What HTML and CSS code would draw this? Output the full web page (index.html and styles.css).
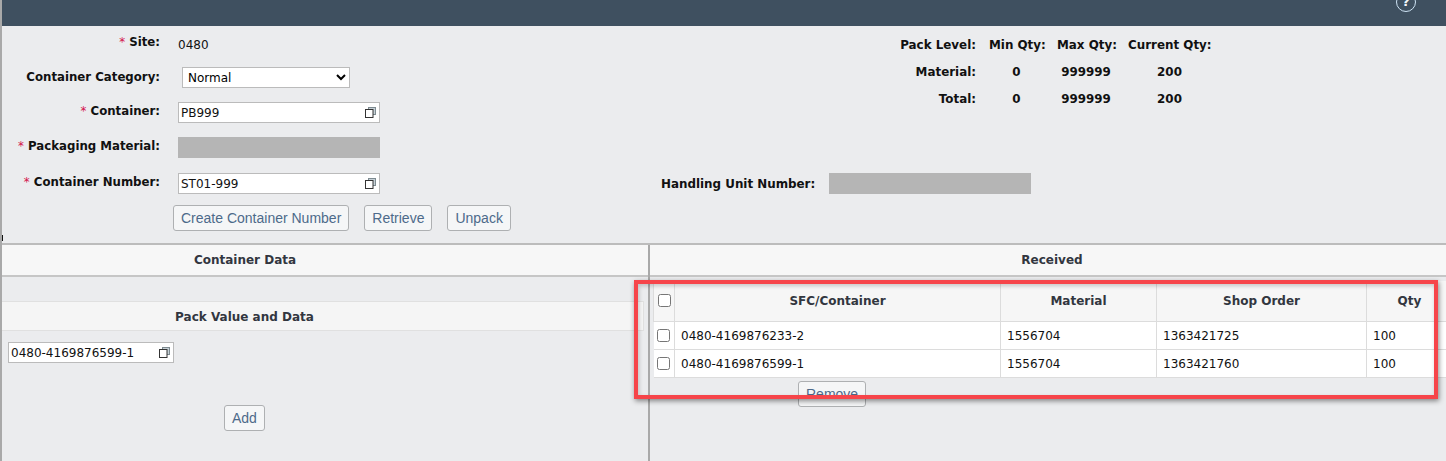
FILE: index.html
```html
<!DOCTYPE html>
<html>
<head>
  <title>Pack / Unpack</title>
<link rel="stylesheet" href="styles.css">
</head>
<body>
  <div class="page">
    <div class="topbar"><span class="help">?</span></div>

    <div class="form">
      <div class="label label-nudge"><span class="req">*</span> Site:</div>
      <div class="site-value">0480</div>
      <div class="stats">
        <div class="stat-label">Pack Level:</div><div class="stat-head">Min Qty:</div><div class="stat-head">Max Qty:</div><div class="stat-head">Current Qty:</div>
        <div class="stat-label">Material:</div><div class="stat-val">0</div><div class="stat-val">999999</div><div class="stat-val">200</div>
        <div class="stat-label">Total:</div><div class="stat-val">0</div><div class="stat-val">999999</div><div class="stat-val">200</div>
      </div>

      <div class="label label-nudge">Container Category:</div>
      <div class="field"><select class="category"><option>Normal</option></select></div>

      <div class="label"><span class="req">*</span> Container:</div>
      <div class="field lookup">
        <input type="text" value="PB999">
        <svg class="copy" viewBox="0 0 11 11"><rect x="3.5" y="0.5" width="7" height="7" fill="#c5d0d6" stroke="#7d8a90"/><rect x="0.5" y="2.5" width="7.5" height="8" fill="#fff" stroke="#333"/></svg>
      </div>

      <div class="label"><span class="req">*</span> Packaging Material:</div>
      <div class="field disabled-box"></div>

      <div class="label"><span class="req">*</span> Container Number:</div>
      <div class="field lookup">
        <input type="text" value="ST01-999">
        <svg class="copy" viewBox="0 0 11 11"><rect x="3.5" y="0.5" width="7" height="7" fill="#c5d0d6" stroke="#7d8a90"/><rect x="0.5" y="2.5" width="7.5" height="8" fill="#fff" stroke="#333"/></svg>
      </div>
      <div class="handling">
        <div class="handling-label">Handling Unit Number:</div>
        <div class="disabled-box"></div>
      </div>
    </div>

    <div class="actions">
      <button class="btn">Create Container Number</button>
      <button class="btn">Retrieve</button>
      <button class="btn">Unpack</button>
    </div>

    <div class="panes">
      <div class="pane-left">
        <div class="pane-head head-data">Container Data</div>
        <div class="sub-head">Pack Value and Data</div>
        <div class="lookup lookup-small">
          <input type="text" value="0480-4169876599-1">
          <svg class="copy" viewBox="0 0 11 11"><rect x="3.5" y="0.5" width="7" height="7" fill="#c5d0d6" stroke="#7d8a90"/><rect x="0.5" y="2.5" width="7.5" height="8" fill="#fff" stroke="#333"/></svg>
        </div>
        <button class="btn add-btn">Add</button>
      </div>

      <div class="pane-right">
        <div class="pane-head head-received">Received</div>
        <div class="table-wrap">
          <table class="grid">
            <colgroup><col class="c-check"><col class="c-sfc"><col class="c-mat"><col class="c-order"><col class="c-qty"></colgroup>
            <thead>
              <tr><th><input type="checkbox"></th><th>SFC/Container</th><th>Material</th><th>Shop Order</th><th>Qty</th></tr>
            </thead>
            <tbody>
              <tr><td><input type="checkbox"></td><td>0480-4169876233-2</td><td>1556704</td><td>1363421725</td><td>100</td></tr>
              <tr><td><input type="checkbox"></td><td>0480-4169876599-1</td><td>1556704</td><td>1363421760</td><td>100</td></tr>
            </tbody>
          </table>
          <button class="btn remove-btn">Remove</button>
        </div>
      </div>
    </div>

    <div class="marker"></div>
    <div class="callout"></div>
  </div>
</body>
</html>
```

FILE: styles.css
```css
* {
  box-sizing: border-box;
}

body {
  margin: 0;
  background: #ebecee;
  font-family: 'DejaVu Sans', Verdana, sans-serif;
  font-size: 12px;
  color: #111;
}

.page {
  position: relative;
  height: 100vh;
  border-left: 2px solid #a9a9a9;
  display: flex;
  flex-direction: column;
  overflow: hidden;
}

.topbar {
  height: 26px;
  background: #3f5060;
  display: flex;
  justify-content: flex-end;
  overflow: hidden;
  padding-right: 30px;
}

.help {
  width: 20px;
  height: 20px;
  margin-top: -8px;
  border: 1.5px solid #cfe4f5;
  border-radius: 50%;
  color: #f2f6fa;
  font-weight: bold;
  font-size: 13px;
  line-height: 18px;
  text-align: center;
}

.form {
  display: grid;
  grid-template-columns: 158px 465px 1fr;
  grid-template-rows: 21px 21px 21px 22px 21px;
  column-gap: 18px;
  row-gap: 14px;
  padding-top: 6px;
}

.label {
  grid-column: 1;
  padding-top: 1px;
  font-size: 11.75px;
  font-weight: bold;
  text-align: right;
  line-height: 17px;
}

.label-nudge {
  padding-top: 2px;
}

.field {
  grid-column: 2;
}

.req {
  color: #d3134b;
  font-weight: normal;
}

.site-value {
  grid-column: 2;
  padding-top: 5px;
  line-height: 17px;
}

.category {
  display: block;
  width: 168px;
  height: 21px;
  margin-left: 4px;
  border: 1px solid #bbb;
  background: #fff;
  font-family: 'DejaVu Sans', Verdana, sans-serif;
  font-size: 12px;
  padding-left: 1px;
}

.lookup {
  position: relative;
  width: 202px;
  height: 21px;
}

.lookup input {
  width: 100%;
  height: 100%;
  padding: 0 22px 0 2px;
  border: 1px solid #bbb;
  background: #fff;
  font-family: 'DejaVu Sans', Verdana, sans-serif;
  font-size: 12px;
  color: #111;
}

.copy {
  position: absolute;
  right: 4px;
  top: 5px;
  width: 11px;
  height: 11px;
}

.disabled-box {
  width: 202px;
  height: 21px;
  background: #b5b5b5;
}

.stats {
  grid-column: 3;
  grid-row: 1 / span 3;
  align-self: start;
  margin-top: -1px;
  display: grid;
  grid-template-columns: 315px 55px 58px 83px;
  grid-auto-rows: 27px;
  column-gap: 13px;
  align-items: center;
  font-size: 11.9px;
  font-weight: bold;
  white-space: nowrap;
}

.stat-label {
  text-align: right;
}

.stat-head,
.stat-val {
  text-align: center;
}

.handling {
  grid-column: 3;
  display: flex;
  align-items: center;
  gap: 13px;
}

.handling-label {
  width: 155px;
  font-size: 11.9px;
  font-weight: bold;
  white-space: nowrap;
}

.actions {
  display: flex;
  gap: 15px;
  margin-top: 11px;
  padding-left: 171px;
}

.btn {
  height: 26px;
  padding: 0 7px;
  border: 1px solid #aeb0b2;
  border-radius: 3px;
  background: #f5f6f7;
  color: #4d6a8a;
  font-family: 'Liberation Sans', Arial, sans-serif;
  font-size: 14px;
}

.panes {
  flex: 1;
  display: flex;
  margin-top: 12px;
  border-top: 2px solid #bcbcbc;
}

.pane-left {
  width: 648px;
  flex-shrink: 0;
  border-right: 2px solid #a9a9a9;
}

.pane-right {
  flex: 1;
  min-width: 0;
}

.pane-head {
  height: 32px;
  background: #f7f7f7;
  border-bottom: 2px solid #c6c6c6;
  display: flex;
  align-items: center;
  justify-content: center;
  font-weight: bold;
  color: #32363f;
}

.head-data {
  padding-right: 160px;
}

.head-received {
  padding-left: 8px;
}

.sub-head {
  width: 642px;
  height: 30px;
  margin-top: 24px;
  padding: 2px 156px 0 0;
  background: #f5f5f5;
  border: 1px solid #e0e0e0;
  border-left: none;
  display: flex;
  align-items: center;
  justify-content: center;
  font-weight: bold;
  color: #32363f;
}

.lookup-small {
  width: 166px;
  margin: 11px 0 0 6px;
}

.add-btn {
  display: block;
  margin: 42px 0 0 222px;
}

.table-wrap {
  padding: 4px 0 0 3px;
}

.grid {
  width: 799px;
  table-layout: fixed;
  border-collapse: collapse;
}

.c-check { width: 21px; }
.c-sfc { width: 326px; }
.c-mat { width: 156px; }
.c-order { width: 210px; }
.c-qty { width: 86px; }

.grid th {
  height: 40px;
  background: #f6f6f6;
  border: 1px solid #dcdcdc;
  border-top: none;
  color: #32363f;
}

.grid td {
  height: 28px;
  padding: 2px 0 0 6px;
  background: #fff;
  border-right: 1px solid #dcdcdc;
  border-bottom: 1px solid #dcdcdc;
}

.grid input {
  display: block;
  width: 13px;
  height: 13px;
  margin: 0 auto;
}

.grid td:first-child {
  padding: 0;
}

.remove-btn {
  display: block;
  margin: 3px 0 0 145px;
}

.marker {
  position: absolute;
  left: -2px;
  top: 235px;
  width: 3px;
  height: 6px;
  border: 1px solid #111;
}

.callout {
  position: absolute;
  left: 632px;
  top: 280px;
  width: 804px;
  height: 119px;
  border: 4px solid #f6454a;
  box-shadow: 1px 2px 5px rgba(0, 0, 0, 0.45), inset 1px 2px 4px rgba(0, 0, 0, 0.2);
}
```
